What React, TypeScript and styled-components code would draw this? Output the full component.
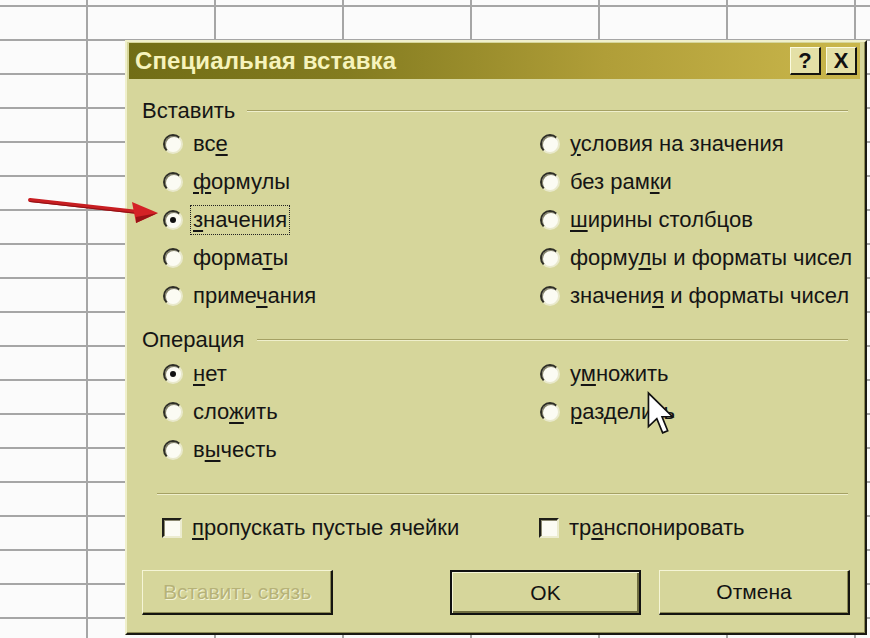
import React from "react";
import styled, { createGlobalStyle, css } from "styled-components";

const GlobalStyle = createGlobalStyle`
  html, body { margin: 0; padding: 0; }
  body {
    width: 870px;
    height: 638px;
    overflow: hidden;
    font-family: "Liberation Sans", Arial, sans-serif;
  }
`;

const Sheet = styled.div`
  position: relative;
  width: 870px;
  height: 638px;
  overflow: hidden;
  background-color: #fbfbfb;
  background-image:
    linear-gradient(to right, #a6a6a6 0 2px, transparent 2px),
    linear-gradient(to bottom, #a6a6a6 0 2px, transparent 2px);
  background-size: 128px 100%, 100% 34px;
  background-position: 86px 0, 0 5px;
`;

const Dialog = styled.div`
  position: absolute;
  left: 125px;
  top: 40px;
  width: 742px;
  height: 595px;
  box-sizing: border-box;
  padding: 1px 5px 0 2px;
  background: #d6d69b;
  border-style: solid;
  border-width: 2px;
  border-color: #f0f0cc #1a1a12 #1a1a12 #f0f0cc;
  box-shadow: inset -1px -1px 0 #8d8b55;
  display: flex;
  flex-direction: column;
`;

const TitleBar = styled.div`
  height: 36px;
  flex: none;
  display: flex;
  align-items: center;
  padding: 0 3px 0 6px;
  background: linear-gradient(to right, #716d16 0%, #847c20 30%, #b09e38 65%, #cab74c 100%);
`;

const TitleText = styled.div`
  flex: 1;
  font-weight: bold;
  font-size: 24px;
  color: #f6f3bc;
  letter-spacing: 0.1px;
`;

const TitleButtons = styled.div`
  display: flex;
  gap: 5px;
`;

const TitleButton = styled.div`
  width: 31px;
  height: 28px;
  box-sizing: border-box;
  display: flex;
  align-items: center;
  justify-content: center;
  background: #e4e0a6;
  border-style: solid;
  border-width: 1px 2px 2px 1px;
  border-color: #fbfbe0 #141410 #141410 #fbfbe0;
  font-weight: bold;
  font-size: 22px;
  color: #111;
`;

const Body = styled.div`
  display: flex;
  flex-direction: column;
  padding: 0 10px 0 13px;
  color: #151515;
  font-size: 22px;
`;

const GroupHeader = styled.div<{ $top: number }>`
  display: flex;
  align-items: center;
  gap: 12px;
  height: 22px;
  margin-top: ${(p) => p.$top}px;
  margin-right: 2px;
`;

const GroupLabel = styled.span`
  line-height: 22px;
`;

const Rule = styled.div<{ $indent?: number }>`
  flex: 1;
  height: 0;
  border-top: 1px solid #a5a164;
  border-bottom: 1px solid #efefcc;
  margin-left: ${(p) => p.$indent ?? 0}px;
`;

const OptionGrid = styled.div<{ $rows: number; $top: number }>`
  display: grid;
  grid-template-columns: 377px 1fr;
  grid-template-rows: repeat(${(p) => p.$rows}, 38px);
  grid-auto-flow: column;
  padding-left: 21px;
  margin-top: ${(p) => p.$top}px;
`;

const Option = styled.label`
  display: flex;
  align-items: center;
  gap: 10px;
  line-height: 24px;
  white-space: nowrap;
`;

const RadioCircle = styled.span<{ $checked?: boolean }>`
  position: relative;
  flex: none;
  width: 20px;
  height: 20px;
  box-sizing: border-box;
  border-radius: 50%;
  background: #fbfbf3;
  border: 2px solid;
  border-color: #2e2e26 #e9e9cc #e9e9cc #2e2e26;
  box-shadow: inset 1px 1px 0 #85836a;
  &::after {
    content: "";
    display: ${(p) => (p.$checked ? "block" : "none")};
    position: absolute;
    left: 50%;
    top: 50%;
    width: 6px;
    height: 6px;
    margin: -3px 0 0 -3px;
    border-radius: 50%;
    background: #111;
  }
`;

const CheckBox = styled.span`
  flex: none;
  width: 20px;
  height: 20px;
  box-sizing: border-box;
  background: #fbfbf3;
  border-style: solid;
  border-width: 2px;
  border-color: #1e1e18 #ecECD0 #ececd0 #1e1e18;
  box-shadow: inset 1px 1px 0 #8a8870;
`;

const OptionText = styled.span<{ $focused?: boolean }>`
  ${(p) =>
    p.$focused &&
    css`
      outline: 1px dotted #222;
      outline-offset: 2px;
    `}
`;

const Key = styled.span`
  text-decoration: underline;
  text-decoration-thickness: 2px;
  text-underline-offset: 3px;
`;

const CheckGrid = styled.div`
  display: grid;
  grid-template-columns: 377px 1fr;
  height: 38px;
  padding-left: 20px;
  margin-top: 14px;
`;

const SeparatorRow = styled.div`
  display: flex;
  margin-top: 24px;
  margin-right: 2px;
`;

const ButtonRow = styled.div`
  display: flex;
  gap: 18px;
  margin-top: 23px;
`;

const Button = styled.div<{ $default?: boolean; $disabled?: boolean; $push?: boolean }>`
  width: 191px;
  height: 45px;
  box-sizing: border-box;
  display: flex;
  align-items: center;
  justify-content: center;
  font-size: 21px;
  color: #121212;
  background: #d6d69b;
  border-style: solid;
  border-width: 1px 2px 2px 1px;
  border-color: #f5f5d6 #151510 #151510 #f5f5d6;
  box-shadow: inset -1px -1px 0 #8d8b55;
  ${(p) => p.$push && css`margin-left: auto;`}
  ${(p) =>
    p.$default &&
    css`
      border-width: 2px;
      border-color: #111;
      box-shadow: inset 1px 1px 0 #f5f5d6, inset -2px -2px 0 #6f6d40;
    `}
  ${(p) =>
    p.$disabled &&
    css`
      color: #b6b278;
      text-shadow: 1px 1px 0 #f3f3d6;
    `}
`;

const Overlay = styled.svg<{ $x: number; $y: number }>`
  position: absolute;
  left: ${(p) => p.$x}px;
  top: ${(p) => p.$y}px;
  overflow: visible;
  pointer-events: none;
`;

type Opt = { pre: string; key: string; post: string; checked?: boolean; focused?: boolean };

const pasteOptions: Opt[] = [
  { pre: "вс", key: "е", post: "" },
  { pre: "", key: "ф", post: "ормулы" },
  { pre: "", key: "з", post: "начения", checked: true, focused: true },
  { pre: "форма", key: "т", post: "ы" },
  { pre: "приме", key: "ч", post: "ания" },
  { pre: "", key: "у", post: "словия на значения" },
  { pre: "без рам", key: "к", post: "и" },
  { pre: "", key: "ш", post: "ирины столбцов" },
  { pre: "форму", key: "л", post: "ы и форматы чисел" },
  { pre: "значени", key: "я", post: " и форматы чисел" },
];

const opOptions: Opt[] = [
  { pre: "", key: "н", post: "ет", checked: true },
  { pre: "сло", key: "ж", post: "ить" },
  { pre: "в", key: "ы", post: "честь" },
  { pre: "у", key: "м", post: "ножить" },
  { pre: "", key: "р", post: "азделить" },
];

const Label = ({ o }: { o: Opt }) => (
  <OptionText $focused={o.focused}>
    {o.pre}
    <Key>{o.key}</Key>
    {o.post}
  </OptionText>
);

const RadioGroup = ({ items, rows, top }: { items: Opt[]; rows: number; top: number }) => (
  <OptionGrid $rows={rows} $top={top}>
    {items.map((o, i) => (
      <Option key={i}>
        <RadioCircle $checked={o.checked} />
        <Label o={o} />
      </Option>
    ))}
  </OptionGrid>
);

export default function App() {
  return (
    <>
      <GlobalStyle />
      <Sheet>
        <Dialog>
          <TitleBar>
            <TitleText>Специальная вставка</TitleText>
            <TitleButtons>
              <TitleButton>?</TitleButton>
              <TitleButton>X</TitleButton>
            </TitleButtons>
          </TitleBar>
          <Body>
            <GroupHeader $top={21}>
              <GroupLabel>Вставить</GroupLabel>
              <Rule />
            </GroupHeader>
            <RadioGroup items={pasteOptions} rows={5} top={3} />
            <GroupHeader $top={14}>
              <GroupLabel>Операция</GroupLabel>
              <Rule />
            </GroupHeader>
            <RadioGroup items={opOptions} rows={3} top={4} />
            <SeparatorRow>
              <Rule $indent={15} />
            </SeparatorRow>
            <CheckGrid>
              <Option>
                <CheckBox />
                <Label o={{ pre: "", key: "п", post: "ропускать пустые ячейки" }} />
              </Option>
              <Option>
                <CheckBox />
                <Label o={{ pre: "тр", key: "а", post: "нспонировать" }} />
              </Option>
            </CheckGrid>
            <ButtonRow>
              <Button $disabled>Вставить связь</Button>
              <Button $default $push>
                OK
              </Button>
              <Button>Отмена</Button>
            </ButtonRow>
          </Body>
        </Dialog>

        <Overlay $x={20} $y={190} width={145} height={40} viewBox="0 0 145 40">
          <line x1="10" y1="10" x2="118" y2="22" stroke="#c81e22" strokeWidth="4" strokeLinecap="round" />
          <line x1="10" y1="11.5" x2="118" y2="23.5" stroke="#8e1014" strokeWidth="1.2" strokeLinecap="round" />
          <polygon points="112,12 138,23 116,33" fill="#d42226" />
          <polygon points="116,27 138,23 116,33" fill="#9a1216" />
        </Overlay>

        <Overlay $x={646} $y={391} width={30} height={46} viewBox="0 0 14 22">
          <path
            d="M1 1 L1 17 L5 13.2 L7.8 20 L10.2 19 L7.5 12.3 L12.5 12.3 Z"
            fill="#ffffff"
            stroke="#111"
            strokeWidth="0.8"
            strokeLinejoin="miter"
          />
        </Overlay>
      </Sheet>
    </>
  );
}
